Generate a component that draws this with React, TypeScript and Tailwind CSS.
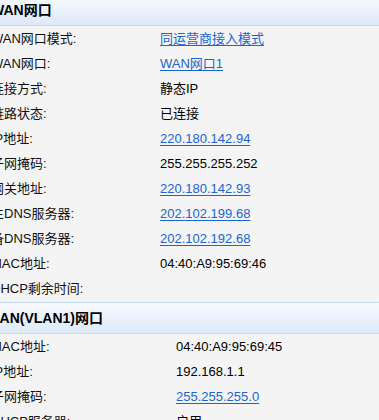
import React from "react";

type Row = { label: string; value: string; link?: boolean };

const wanRows: Row[] = [
  { label: "WAN网口模式:", value: "同运营商接入模式", link: true },
  { label: "WAN网口:", value: "WAN网口1", link: true },
  { label: "连接方式:", value: "静态IP" },
  { label: "链路状态:", value: "已连接" },
  { label: "IP地址:", value: "220.180.142.94", link: true },
  { label: "子网掩码:", value: "255.255.255.252" },
  { label: "网关地址:", value: "220.180.142.93", link: true },
  { label: "主DNS服务器:", value: "202.102.199.68", link: true },
  { label: "备DNS服务器:", value: "202.102.192.68", link: true },
  { label: "MAC地址:", value: "04:40:A9:95:69:46" },
  { label: "DHCP剩余时间:", value: "" },
];

const lanRows: Row[] = [
  { label: "MAC地址:", value: "04:40:A9:95:69:45" },
  { label: "IP地址:", value: "192.168.1.1" },
  { label: "子网掩码:", value: "255.255.255.0", link: true },
  { label: "DHCP服务器:", value: "启用" },
];

function SectionHeader({ title }: { title: string }) {
  return (
    <div className="h-[32px] flex items-center border-y border-[#c4d8ee] bg-gradient-to-b from-[#f8fbff] to-[#dde9f9] text-[14px] font-bold text-black">
      {title}
    </div>
  );
}

function InfoRow({ row, labelWidth }: { row: Row; labelWidth: string }) {
  return (
    <div className="h-[25px] flex items-center text-[13px]">
      <span className={`${labelWidth} shrink-0 text-[#111]`}>{row.label}</span>
      {row.link ? (
        <a href="#" className="text-[#1a64d4] underline underline-offset-2">
          {row.value}
        </a>
      ) : (
        <span className="text-black">{row.value}</span>
      )}
    </div>
  );
}

export default function App() {
  return (
    <div
      className="w-[379px] h-[420px] overflow-hidden bg-[#f4f4f4]"
      style={{ fontFamily: '"Liberation Sans", "Noto Sans CJK SC", sans-serif' }}
    >
      <div className="-mt-[6px] -ml-[9px] whitespace-nowrap">
        <SectionHeader title="WAN网口" />
        {wanRows.map((r) => (
          <InfoRow key={r.label} row={r} labelWidth="w-[169px]" />
        ))}
        <div className="h-px" />
        <SectionHeader title="LAN(VLAN1)网口" />
        {lanRows.map((r) => (
          <InfoRow key={r.label} row={r} labelWidth="w-[185px]" />
        ))}
      </div>
    </div>
  );
}
